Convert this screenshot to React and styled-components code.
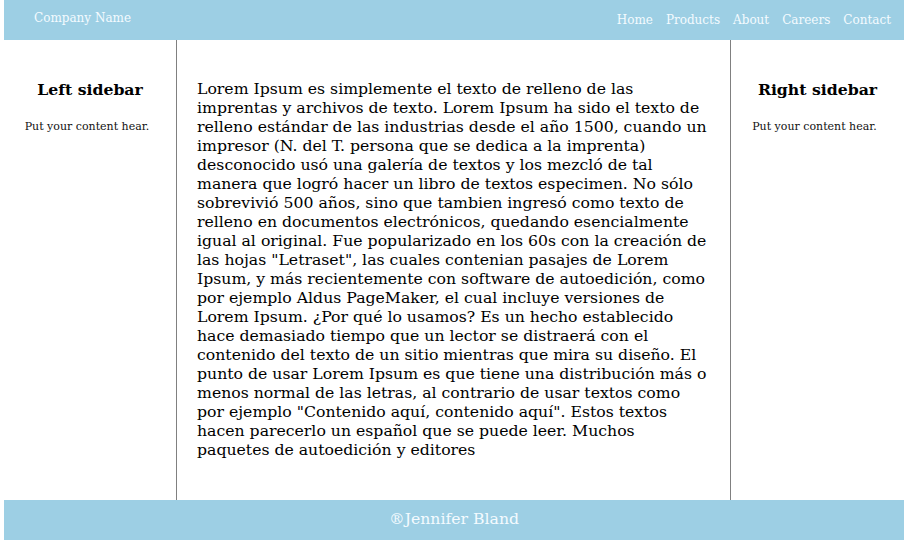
import React from "react"
import styled, { createGlobalStyle } from "styled-components"

const GlobalStyle = createGlobalStyle`
  body {
    margin: 0;
    font-family: "DejaVu Serif", serif;
    background: #ffffff;
  }
`

const links = ["Home", "Products", "About", "Careers", "Contact"]

const loremText =
  'Lorem Ipsum es simplemente el texto de relleno de las imprentas y archivos de texto. Lorem Ipsum ha sido el texto de relleno estándar de las industrias desde el año 1500, cuando un impresor (N. del T. persona que se dedica a la imprenta) desconocido usó una galería de textos y los mezcló de tal manera que logró hacer un libro de textos especimen. No sólo sobrevivió 500 años, sino que tambien ingresó como texto de relleno en documentos electrónicos, quedando esencialmente igual al original. Fue popularizado en los 60s con la creación de las hojas "Letraset", las cuales contenian pasajes de Lorem Ipsum, y más recientemente con software de autoedición, como por ejemplo Aldus PageMaker, el cual incluye versiones de Lorem Ipsum. ¿Por qué lo usamos? Es un hecho establecido hace demasiado tiempo que un lector se distraerá con el contenido del texto de un sitio mientras que mira su diseño. El punto de usar Lorem Ipsum es que tiene una distribución más o menos normal de las letras, al contrario de usar textos como por ejemplo "Contenido aquí, contenido aquí". Estos textos hacen parecerlo un español que se puede leer. Muchos paquetes de autoedición y editores'

const Sidebar = ({ title }) => (
  <SidebarBox>
    <SidebarTitle>{title}</SidebarTitle>
    <SidebarText>Put your content hear.</SidebarText>
  </SidebarBox>
)

const App = () => {
  return (
    <>
      <GlobalStyle />
      <PageContainer>
        <Header>
          <CompanyName>Company Name</CompanyName>
          <Nav>
            {links.map((link) => (
              <NavLink key={link}>{link}</NavLink>
            ))}
          </Nav>
        </Header>
        <ContentRow>
          <Sidebar title="Left sidebar" />
          <MainContent>
            <MainText>{loremText}</MainText>
          </MainContent>
          <Sidebar title="Right sidebar" />
        </ContentRow>
        <Footer>®Jennifer Bland</Footer>
      </PageContainer>
    </>
  )
}

const PageContainer = styled.div`
  width: 900px;
  margin: 0 auto;
`

const Header = styled.header`
  height: 40px;
  background: #9dcfe4;
  display: flex;
  justify-content: space-between;
  align-items: flex-start;
  padding: 0 13px 0 30px;
`

const CompanyName = styled.div`
  color: #f4fbff;
  font-size: 12px;
  line-height: 16px;
  padding-top: 10px;
`

const Nav = styled.nav`
  display: flex;
  gap: 13px;
  padding-top: 12px;
`

const NavLink = styled.a`
  color: #f4fbff;
  font-size: 12px;
  line-height: 16px;
  cursor: pointer;
`

const ContentRow = styled.div`
  display: grid;
  grid-template-columns: 172px 1fr 173px;
  min-height: 460px;
`

const SidebarBox = styled.aside`
  text-align: center;
  padding-top: 39px;
`

const SidebarTitle = styled.h3`
  margin: 0;
  font-size: 15.7px;
  line-height: 22px;
  font-weight: bold;
  color: #000;
`

const SidebarText = styled.p`
  margin: 19px 0 0;
  padding-right: 6px;
  font-size: 11px;
  line-height: 14px;
  color: #111;
`

const MainContent = styled.main`
  border-left: 1px solid #808080;
  border-right: 1px solid #808080;
  padding: 39px 20px 20px 20px;
`

const MainText = styled.p`
  margin: 0;
  font-size: 15.7px;
  line-height: 19px;
  color: #000;
`

const Footer = styled.footer`
  height: 40px;
  background: #9dcfe4;
  color: #f4fbff;
  font-size: 15.7px;
  display: flex;
  align-items: center;
  justify-content: center;
  padding-bottom: 4px;
  box-sizing: border-box;
`

export default App
